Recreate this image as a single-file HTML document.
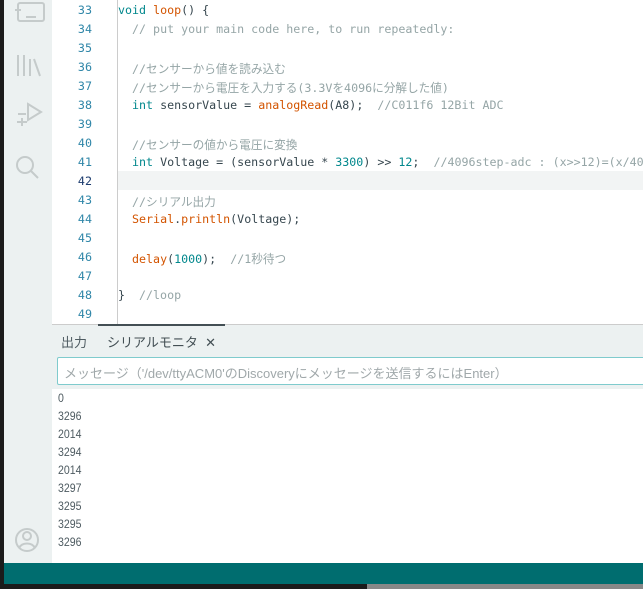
<!DOCTYPE html>
<html><head><meta charset="utf-8"><style>
*{margin:0;padding:0;box-sizing:border-box}
body{width:643px;height:589px;overflow:hidden;background:#fff;position:relative;font-family:"Liberation Sans","Noto Sans CJK JP",sans-serif}
.dark{position:absolute;left:0;top:0;width:4px;height:589px;background:#1b1b1b}
.side{position:absolute;left:4px;top:0;width:48px;height:563px;background:#ecf1f1}
.gline{position:absolute;left:117px;top:0;width:1px;height:324px;background:#ccc}
.cur{position:absolute;left:118px;top:171px;width:525px;height:19px;background:#f2f4f4}
.ln{position:absolute;left:52px;width:40px;text-align:right;font:11.7px "DejaVu Sans Mono","Noto Sans CJK JP",monospace;color:#2f86a8}
.code{position:absolute;left:118px;white-space:pre;font:11.65px "DejaVu Sans Mono","Noto Sans CJK JP",monospace;color:#37474f}
.c{color:#95a5a6}.k{color:#00878c}.f{color:#d35400}
.panel{position:absolute;left:52px;top:324px;width:591px;height:239px;background:#ecf1f1;border-top:1px solid #ccc}
.tabline{position:absolute;left:98px;top:324px;width:127px;height:2px;background:#434f54}
.tab{position:absolute;top:332px;font-size:13px;color:#4e5b61}
.inp{position:absolute;left:57px;top:357px;width:600px;height:28px;background:#fff;border:1px solid #7fcbcd;border-radius:2px;font-size:13px;color:#a0a8aa;padding:5px 6px}
.out{position:absolute;left:52px;top:389px;width:591px;height:174px;background:#fff}
.o{position:absolute;left:58px;font-size:12px;color:#4e5b61;transform:scaleX(0.88);transform-origin:left}
.status{position:absolute;left:4px;top:563px;width:639px;height:21px;background:#006d6f}
.bot{position:absolute;left:0;top:584px;width:643px;height:5px;background:#1b1b1b}
.bot2{position:absolute;left:367px;top:584px;width:276px;height:5px;background:#888}
</style></head><body>
<div class="dark"></div>
<div class="side">
<svg width="48" height="563" viewBox="0 0 48 563" fill="none" stroke="#c5cbcb" stroke-width="2">
<rect x="14" y="3" width="26" height="18" rx="2"/><path d="M11 10h6M22 17h10"/>
<path d="M14 55V76M20 55V76M26 59V76M30 59l6 17"/>
<path d="M24 104l13 8-13 8z M14 114h8 M13 122h10 M18 118v8"/>
<circle cx="21" cy="165" r="8"/><path d="M27 171l7 7"/>
<circle cx="23" cy="540" r="11"/><circle cx="23" cy="536" r="4"/><path d="M15 548c3-6 13-6 16 0"/>
</svg>
</div>
<div class="cur"></div>
<div class="gline"></div>
<div class="ln" style="top:3px">33</div><div class="ln" style="top:22px">34</div><div class="ln" style="top:41px">35</div><div class="ln" style="top:60px">36</div><div class="ln" style="top:79px">37</div><div class="ln" style="top:98px">38</div><div class="ln" style="top:117px">39</div><div class="ln" style="top:136px">40</div><div class="ln" style="top:155px">41</div><div class="ln" style="top:174px;color:#1c3b6e">42</div><div class="ln" style="top:193px">43</div><div class="ln" style="top:212px">44</div><div class="ln" style="top:231px">45</div><div class="ln" style="top:250px">46</div><div class="ln" style="top:269px">47</div><div class="ln" style="top:288px">48</div><div class="ln" style="top:307px">49</div>
<div class="code" style="top:3px"><span class="k">void</span> <span class="f">loop</span>() {</div>
<div class="code" style="top:22px">  <span class="c">// put your main code here, to run repeatedly:</span></div>
<div class="code" style="top:60px">  <span class="c">//センサーから値を読み込む</span></div>
<div class="code" style="top:79px">  <span class="c">//センサーから電圧を入力する(3.3Vを4096に分解した値)</span></div>
<div class="code" style="top:98px">  <span class="k">int</span> sensorValue = <span class="f">analogRead</span>(A8);  <span class="c">//C011f6 12Bit ADC</span></div>
<div class="code" style="top:136px">  <span class="c">//センサーの値から電圧に変換</span></div>
<div class="code" style="top:155px">  <span class="k">int</span> Voltage = (sensorValue * <span class="k">3300</span>) &gt;&gt; <span class="k">12</span>;  <span class="c">//4096step-adc : (x&gt;&gt;12)=(x/4096)</span></div>
<div class="code" style="top:193px">  <span class="c">//シリアル出力</span></div>
<div class="code" style="top:212px">  <span class="f">Serial</span>.<span class="f">println</span>(Voltage);</div>
<div class="code" style="top:250px">  <span class="f">delay</span>(<span class="k">1000</span>);  <span class="c">//1秒待つ</span></div>
<div class="code" style="top:288px">}  <span class="c">//loop</span></div>
<div class="panel"></div>
<div class="tabline"></div>
<div class="tab" style="left:61px">出力</div>
<div class="tab" style="left:107px;color:#434f54">シリアルモニタ&nbsp;&nbsp;✕</div>
<div class="inp">メッセージ（'/dev/ttyACM0'のDiscoveryにメッセージを送信するにはEnter）</div>
<div class="out"></div>
<div class="o" style="top:391px">0</div><div class="o" style="top:409px">3296</div><div class="o" style="top:427px">2014</div><div class="o" style="top:445px">3294</div><div class="o" style="top:463px">2014</div><div class="o" style="top:481px">3297</div><div class="o" style="top:499px">3295</div><div class="o" style="top:517px">3295</div><div class="o" style="top:535px">3296</div>
<div class="status"></div>
<div class="bot"></div><div class="bot2"></div>
</body></html>
